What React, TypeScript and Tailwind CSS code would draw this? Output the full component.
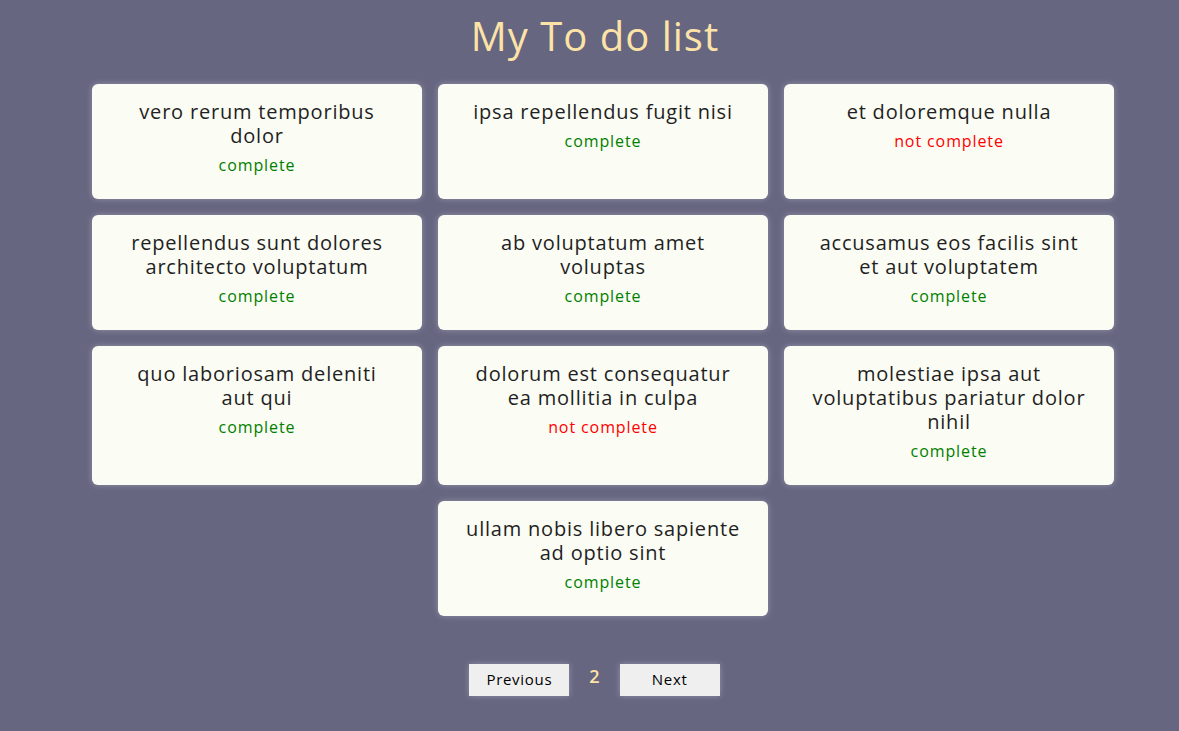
import React from "react";

const todos: { lines: string[]; done: boolean }[] = [
  { lines: ["vero rerum temporibus", "dolor"], done: true },
  { lines: ["ipsa repellendus fugit nisi"], done: true },
  { lines: ["et doloremque nulla"], done: false },
  { lines: ["repellendus sunt dolores", "architecto voluptatum"], done: true },
  { lines: ["ab voluptatum amet", "voluptas"], done: true },
  { lines: ["accusamus eos facilis sint", "et aut voluptatem"], done: true },
  { lines: ["quo laboriosam deleniti", "aut qui"], done: true },
  { lines: ["dolorum est consequatur", "ea mollitia in culpa"], done: false },
  { lines: ["molestiae ipsa aut", "voluptatibus pariatur dolor", "nihil"], done: true },
  { lines: ["ullam nobis libero sapiente", "ad optio sint"], done: true },
];

export default function App() {
  return (
    <div
      className="min-h-[731px] w-full bg-[#666680] flex flex-col items-center"
      style={{ fontFamily: '"Open Sans", "Liberation Sans", sans-serif' }}
    >
      <h1 className="mt-[12px] text-[40px] leading-[48px] font-medium tracking-[1px] text-[#fde3a7] pl-[11px]">
        My To do list
      </h1>
      <div className="mt-[24px] pl-[27px] flex flex-wrap justify-center gap-x-4 gap-y-[16.5px] w-[1049px]">
        {todos.map((t, i) => (
          <div
            key={i}
            className="w-[330px] min-h-[114px] bg-[#fbfcf3] rounded-[6px] pt-4 pb-[21.5px] px-[20px] text-center shadow-[0_0_6px_rgba(200,200,220,0.45)]"
          >
            <div className="text-[20px] leading-6 tracking-[0.8px] text-[#1f1f24]">
              {t.lines.map((l, j) => (
                <div key={j}>{l}</div>
              ))}
            </div>
            <div
              className={
                "mt-[5px] text-[16px] leading-6 tracking-[0.9px] " +
                (t.done ? "text-[#008000]" : "text-[#ff0000]")
              }
            >
              {t.done ? "complete" : "not complete"}
            </div>
          </div>
        ))}
      </div>
      <div className="mt-[48px] pl-[10px] flex items-center gap-5">
        <button className="w-[100px] h-[32px] bg-[#efefef] text-[15px] tracking-[0.7px] text-black shadow-[0_0_6px_rgba(200,200,220,0.45)]">
          Previous
        </button>
        <span className="text-[18px] font-semibold text-[#fde3a7] -mt-[6px]">2</span>
        <button className="w-[100px] h-[32px] bg-[#efefef] text-[15px] tracking-[0.7px] text-black shadow-[0_0_6px_rgba(200,200,220,0.45)]">
          Next
        </button>
      </div>
    </div>
  );
}
